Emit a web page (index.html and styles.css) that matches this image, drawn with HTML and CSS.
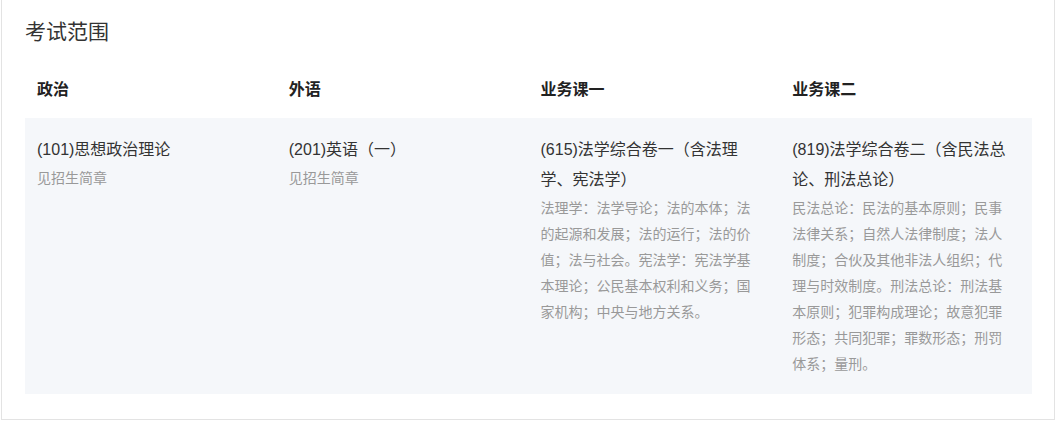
FILE: index.html
```html
<!DOCTYPE html>
<html lang="zh-CN">
<head>
<meta charset="utf-8">
<title>考试范围</title>
<link rel="stylesheet" href="styles.css">
</head>
<body>
<section class="card">
  <h2 class="title">考试范围</h2>
  <div class="row head">
    <div class="cell">政治</div>
    <div class="cell">外语</div>
    <div class="cell">业务课一</div>
    <div class="cell">业务课二</div>
  </div>
  <div class="row body">
    <div class="cell">
      <div class="name">(101)思想政治理论</div>
      <div class="desc">见招生简章</div>
    </div>
    <div class="cell">
      <div class="name">(201)英语（一）</div>
      <div class="desc">见招生简章</div>
    </div>
    <div class="cell">
      <div class="name">(615)法学综合卷一（含法理学、宪法学）</div>
      <div class="desc">法理学：法学导论；法的本体；法的起源和发展；法的运行；法的价值；法与社会。宪法学：宪法学基本理论；公民基本权利和义务；国家机构；中央与地方关系。</div>
    </div>
    <div class="cell">
      <div class="name">(819)法学综合卷二（含民法总论、刑法总论）</div>
      <div class="desc">民法总论：民法的基本原则；民事法律关系；自然人法律制度；法人制度；合伙及其他非法人组织；代理与时效制度。刑法总论：刑法基本原则；犯罪构成理论；故意犯罪形态；共同犯罪；罪数形态；刑罚体系；量刑。</div>
    </div>
  </div>
</section>
</body>
</html>
```

FILE: styles.css
```css
* { box-sizing: border-box; }
html, body { margin: 0; padding: 0; background: #fff; }
body {
  font-family: "Liberation Sans", "Noto Sans CJK SC", sans-serif;
  color: #333;
}
.card {
  width: 1054px;
  margin: -1px 0 0 1px;
  border: 1px solid #e3e3e3;
  padding: 17px 22px 25px 23px;
  background: #fff;
}
.title {
  margin: 0 0 18px 0;
  font-size: 21px;
  line-height: 29px;
  font-weight: normal;
  color: #333;
}
.row {
  display: grid;
  grid-template-columns: repeat(4, 1fr);
}
.head .cell {
  padding: 17px 24px 19px 12px;
  font-size: 16px;
  line-height: 18px;
  font-weight: bold;
  color: #222;
}
.body {
  background: #f5f7fa;
}
.body .cell {
  padding: 17px 24px 17px 12px;
}
.name {
  font-size: 16px;
  line-height: 30px;
  color: #333;
}
.desc {
  font-size: 14px;
  line-height: 26px;
  color: #999;
}
```
